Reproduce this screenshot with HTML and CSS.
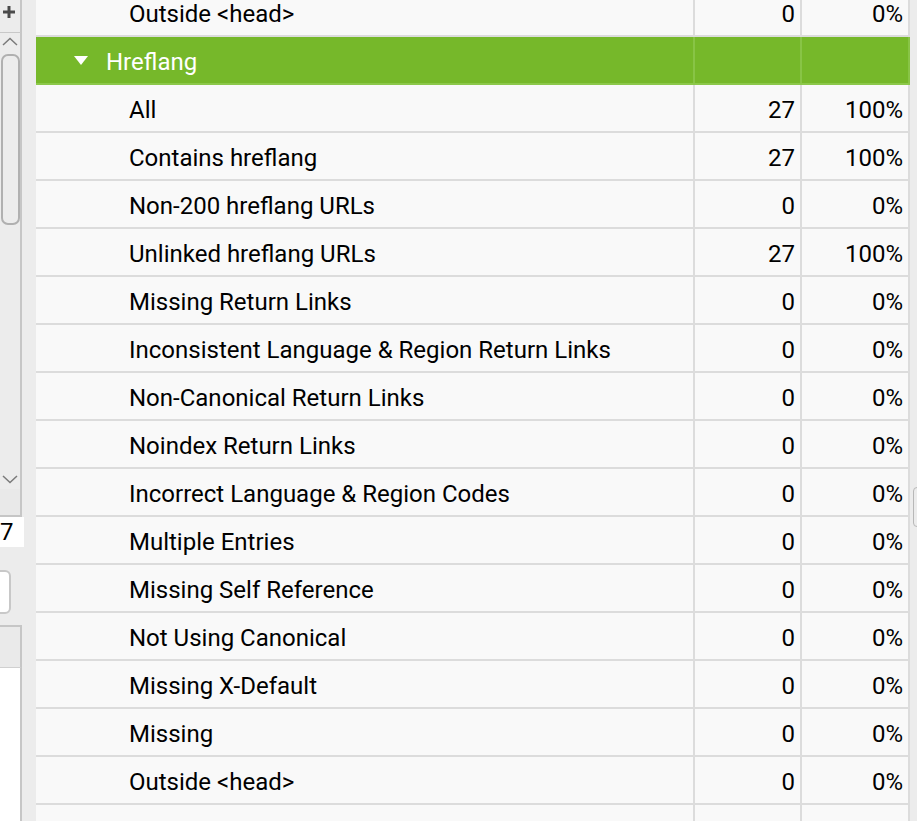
FILE: index.html
```html
<!DOCTYPE html>
<html lang="en">
<head>
    <meta charset="UTF-8">
    <meta name="viewport" content="width=device-width, initial-scale=1.0">
    <title>Hreflang</title>
    <link rel="stylesheet" href="styles.css">
</head>
<body>
    <div class="app">
        <div class="side">
            <div class="side-top">
                <svg width="14" height="14" viewBox="0 0 14 14"><path d="M7 1v12M1 7h12" stroke="#4a4a4a" stroke-width="3"/></svg>
            </div>
            <div class="scroll">
                <svg class="chev-up" width="16" height="9" viewBox="0 0 16 9"><path d="M1 8L8 1.5L15 8" fill="none" stroke="#7a7a7a" stroke-width="1.5"/></svg>
                <div class="thumb"></div>
                <div class="track"></div>
                <svg class="chev-down" width="16" height="9" viewBox="0 0 16 9"><path d="M1 1L8 7.5L15 1" fill="none" stroke="#7a7a7a" stroke-width="1.5"/></svg>
            </div>
            <div class="side-foot"></div>
            <div class="count">7</div>
            <div class="search"></div>
            <div class="mini-head"></div>
            <div class="mini-body"></div>
        </div>

        <div class="table">
            <div class="row">
                <div class="cell label">Outside &lt;head&gt;</div>
                <div class="cell num">0</div>
                <div class="cell pct">0%</div>
            </div>
            <div class="row group">
                <div class="cell label">
                    <svg class="caret" width="14" height="9" viewBox="0 0 14 9"><path d="M0 0H14L7 9Z" fill="#fff"/></svg>
                    Hreflang
                </div>
                <div class="cell num"></div>
                <div class="cell pct"></div>
            </div>
            <div class="row"><div class="cell label">All</div><div class="cell num">27</div><div class="cell pct">100%</div></div>
            <div class="row"><div class="cell label">Contains hreflang</div><div class="cell num">27</div><div class="cell pct">100%</div></div>
            <div class="row"><div class="cell label">Non-200 hreflang URLs</div><div class="cell num">0</div><div class="cell pct">0%</div></div>
            <div class="row"><div class="cell label">Unlinked hreflang URLs</div><div class="cell num">27</div><div class="cell pct">100%</div></div>
            <div class="row"><div class="cell label">Missing Return Links</div><div class="cell num">0</div><div class="cell pct">0%</div></div>
            <div class="row"><div class="cell label">Inconsistent Language &amp; Region Return Links</div><div class="cell num">0</div><div class="cell pct">0%</div></div>
            <div class="row"><div class="cell label">Non-Canonical Return Links</div><div class="cell num">0</div><div class="cell pct">0%</div></div>
            <div class="row"><div class="cell label">Noindex Return Links</div><div class="cell num">0</div><div class="cell pct">0%</div></div>
            <div class="row"><div class="cell label">Incorrect Language &amp; Region Codes</div><div class="cell num">0</div><div class="cell pct">0%</div></div>
            <div class="row"><div class="cell label">Multiple Entries</div><div class="cell num">0</div><div class="cell pct">0%</div></div>
            <div class="row"><div class="cell label">Missing Self Reference</div><div class="cell num">0</div><div class="cell pct">0%</div></div>
            <div class="row"><div class="cell label">Not Using Canonical</div><div class="cell num">0</div><div class="cell pct">0%</div></div>
            <div class="row"><div class="cell label">Missing X-Default</div><div class="cell num">0</div><div class="cell pct">0%</div></div>
            <div class="row"><div class="cell label">Missing</div><div class="cell num">0</div><div class="cell pct">0%</div></div>
            <div class="row"><div class="cell label">Outside &lt;head&gt;</div><div class="cell num">0</div><div class="cell pct">0%</div></div>
            <div class="row"><div class="cell label"></div><div class="cell num"></div><div class="cell pct"></div></div>
        </div>

        <div class="edge">
            <div class="handle"></div>
        </div>
    </div>
</body>
</html>
```

FILE: styles.css
```css
body {
    margin: 0;
    padding: 0;
    background-color: #ececec;
    font-family: Roboto, "Liberation Sans", sans-serif;
    overflow: hidden;
}
.app {
    display: flex;
    height: 821px;
    overflow: hidden;
}

/* left panel */
.side {
    width: 22px;
    flex: none;
    display: flex;
    flex-direction: column;
    margin-right: 14px;
}
.side-top {
    height: 33px;
    border-bottom: 1px solid #c8c8c8;
    border-right: 2px solid #c6c6c6;
    padding: 4px 0 0 2px;
    box-sizing: border-box;
}
.scroll {
    height: 456px;
    border-right: 2px solid #c6c6c6;
    display: flex;
    flex-direction: column;
    align-items: flex-start;
}
.chev-up {
    margin: 4px 0 0 2px;
}
.thumb {
    width: 15px;
    height: 167px;
    margin: 8px 0 0 1px;
    border: 2px solid #b0b0b0;
    border-radius: 7px;
}
.track {
    flex: 1;
}
.chev-down {
    margin: 0 0 5px 2px;
}
.side-foot {
    height: 26px;
    background-color: #e9e9e9;
    border-right: 2px solid #c6c6c6;
    border-bottom: 2px solid #c6c6c6;
}
.count {
    width: 24px;
    height: 30px;
    background-color: #fff;
    font-size: 24px;
    line-height: 30px;
    color: #000;
    box-sizing: border-box;
}
.search {
    width: 41px;
    height: 44px;
    margin: 23px 0 0 -30px;
    border: 2px solid #c8c8c8;
    border-radius: 6px;
    background-color: #fff;
    box-sizing: border-box;
}
.mini-head {
    height: 40px;
    margin-top: 11px;
    border-top: 2px solid #c6c6c6;
    border-bottom: 1px solid #d0d0d0;
    border-right: 2px solid #c6c6c6;
    background-color: #eaeaea;
}
.mini-body {
    flex: 1;
    background-color: #fff;
    border-right: 2px solid #c6c6c6;
}

/* main table */
.table {
    width: 874px;
    flex: none;
    margin-top: -11px;
    background-color: #f9f9f9;
}
.row {
    display: flex;
    height: 48px;
    border-bottom: 2px solid #dcdcdc;
    box-sizing: border-box;
    font-size: 24px;
    color: #000;
}
.cell {
    display: flex;
    align-items: center;
    border-right: 2px solid #dcdcdc;
    padding-top: 4px;
    white-space: nowrap;
}
.label {
    padding-left: 93px;
    width: 564px;
}
.num {
    justify-content: flex-end;
    padding-right: 5px;
    width: 100px;
}
.pct {
    justify-content: flex-end;
    padding-right: 5px;
    width: 101px;
}
.group {
    background-color: #76b82a;
    color: #fff;
    border-bottom-color: #8cc84a;
}
.group .cell {
    border-right-color: #88c446;
}
.group .label {
    padding-left: 38px;
    width: 619px;
}
.caret {
    margin: 0 18px 4px 0;
}

.edge {
    flex: 1;
}
.handle {
    width: 10px;
    height: 38px;
    margin: 487px 0 0 3px;
    border: 1px solid #b8b8b8;
    border-radius: 4px;
}
```
